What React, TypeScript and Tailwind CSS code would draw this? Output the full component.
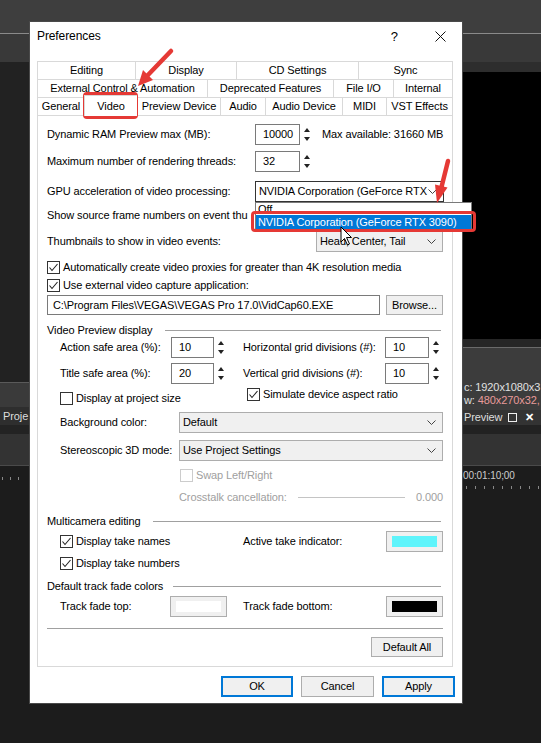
import React from 'react';

// 數字輸入框旁的上下箭頭
const SpinArrows = () => (
  <svg width="8" height="21" viewBox="0 0 8 21" className="ml-[3px] shrink-0">
    <path d="M1 8 L4 4 L7 8 Z" fill="#222" />
    <path d="M1 13 L4 17 L7 13 Z" fill="#222" />
  </svg>
);

const SpinBox = ({ value, w }: { value: string; w: string }) => (
  <div className="flex items-center shrink-0">
    <div className={`${w} h-[21px] border border-[#7a7a7a] bg-white flex items-center pl-[7px]`}>{value}</div>
    <SpinArrows />
  </div>
);

const Chevron = () => (
  <svg width="9" height="5" viewBox="0 0 9 5" className="shrink-0">
    <path d="M0.5 0.5 L4.5 4.5 L8.5 0.5" fill="none" stroke="#444" strokeWidth="1" />
  </svg>
);

const Select = ({ text, w, focused }: { text: string; w: string; focused?: boolean }) => (
  <div
    className={`${w} h-[21px] border ${
      focused ? 'border-[#333333] bg-white' : 'border-[#adadad] bg-[#f0f0f0]'
    } flex items-center justify-between pl-[3px] pr-[6px] shrink-0`}
  >
    <span className="whitespace-nowrap">{text}</span>
    <Chevron />
  </div>
);

const Check = ({ checked, label, disabled }: { checked?: boolean; label: string; disabled?: boolean }) => (
  <div className="flex items-center h-[14px]">
    <div
      className={`w-[13px] h-[13px] border ${
        disabled ? 'border-[#cccccc]' : 'border-[#333333]'
      } bg-white flex items-center justify-center shrink-0`}
    >
      {checked && (
        <svg width="11" height="11" viewBox="0 0 11 11">
          <path d="M1.5 5.5 L4 8.5 L9.5 2" fill="none" stroke="#222" strokeWidth="1.1" />
        </svg>
      )}
    </div>
    <span className={`ml-[3px] whitespace-nowrap ${disabled ? 'text-[#a0a0a0]' : ''}`}>{label}</span>
  </div>
);

const GroupHeader = ({ label, w }: { label: string; w: string }) => (
  <div className="flex items-center h-[14px]">
    <span className={`${w} shrink-0 whitespace-nowrap`}>{label}</span>
    <div className="flex-1 h-px bg-[#a0a0a0] mr-[2px]" />
  </div>
);

const ColorBtn = ({ inner }: { inner: string }) => (
  <div className="w-[57px] h-[21px] border border-[#adadad] bg-[#f0f0f0] flex items-center justify-center shrink-0">
    <div className={`w-[45px] h-[11px] ${inner}`} />
  </div>
);

const Tab = ({ label, w, last }: { label: string; w: string; last?: boolean }) => (
  <div
    className={`${w} h-[18px] border-t border-l ${
      last ? 'border-r' : ''
    } border-[#d9d9d9] bg-white flex items-center justify-center whitespace-nowrap`}
  >
    {label}
  </div>
);

export default function App() {
  return (
    <div className="relative w-[541px] h-[743px] overflow-hidden bg-[#1c1c1c] font-['Liberation_Sans',Arial,sans-serif] text-[11px] leading-[13px] tracking-[-0.1px] text-black">
      {/* 背景：VEGAS 主視窗 */}
      <div className="absolute inset-0 flex flex-col">
        <div className="h-[33px] bg-[#3e3e3e]" />
        <div className="h-px bg-[#8a8a8a]" />
        <div className="h-[28px] bg-[#393939]" />
        <div className="flex flex-1">
          <div className="w-[29px] flex flex-col">
            <div className="h-[320px] bg-[#222222]" />
            <div className="h-px bg-[#5a5a5a]" />
            <div className="h-[24px] bg-[#3a3a3a]" />
            <div className="h-[18px] bg-[#2e2e2e] text-[#dddddd] text-[11px] pl-[3px] flex items-center whitespace-nowrap">
              Proje
            </div>
            <div className="h-[9px] bg-[#232323]" />
            <div className="h-[31px] bg-[#333333]" />
            <div className="h-px bg-[#4a4a4a]" />
            <div className="h-[14px] flex items-end gap-[7px] pl-[2px]">
              <div className="w-px h-[3px] bg-[#888]" />
              <div className="w-px h-[3px] bg-[#888]" />
              <div className="w-px h-[3px] bg-[#888]" />
            </div>
          </div>
          <div className="flex-1" />
          <div className="w-[78px] flex flex-col">
            <div className="h-[10px] bg-[#2d2d2d]" />
            <div className="h-[267px] bg-black" />
            <div className="h-[8px] bg-[#262626]" />
            <div className="h-px bg-[#6a6a6a]" />
            <div className="h-[62px] bg-[#3c3c3c] text-[11px] leading-[13px] flex flex-col justify-end pb-[3px] pl-[1px] whitespace-nowrap">
              <div className="text-[#e0e0e0]">c: 1920x1080x3</div>
              <div>
                <span className="text-[#e0e0e0]">w: </span>
                <span className="text-[#e79a9a]">480x270x32,</span>
              </div>
            </div>
            <div className="h-[15px] bg-[#333333] text-[11px] text-[#dddddd] flex items-center pl-[1px] whitespace-nowrap">
              Preview
              <div className="ml-[6px] w-[9px] h-[9px] border border-[#eeeeee]" />
              <span className="ml-[8px] font-bold text-white">✕</span>
            </div>
            <div className="h-[9px] bg-[#222222]" />
            <div className="h-[31px] bg-[#333333]" />
            <div className="h-px bg-[#4a4a4a]" />
            <div className="h-[20px] text-[10px] text-[#cccccc] pt-[3px] whitespace-nowrap">00:01:10;00</div>
            <div className="flex gap-[8px] pl-[3px]">
              {[0, 1, 2, 3, 4, 5, 6, 7, 8].map((i) => (
                <div key={i} className="w-px h-[3px] bg-[#888]" />
              ))}
            </div>
          </div>
        </div>
      </div>

      {/* Preferences 對話框 */}
      <div className="absolute left-[29px] top-[21px] w-[434px] h-[683px] border border-[#4a4a4a] bg-white flex flex-col">
        <div className="h-[29px] flex items-center pl-[7px] text-[12px]">
          <span>Preferences</span>
          <span className="ml-auto text-[13px]">?</span>
          <svg width="11" height="11" viewBox="0 0 11 11" className="ml-[37px] mr-[16px]">
            <path d="M0.5 0.5 L10.5 10.5 M10.5 0.5 L0.5 10.5" stroke="#111" strokeWidth="1" />
          </svg>
        </div>

        <div className="mt-[10px] pl-[7px] pr-[9px]">
          <div className="flex">
            <Tab label="Editing" w="w-[98px]" />
            <Tab label="Display" w="w-[101px]" />
            <Tab label="CD Settings" w="w-[122px]" />
            <Tab label="Sync" w="w-[95px]" last />
          </div>
          <div className="flex">
            <Tab label="External Control & Automation" w="w-[170px]" />
            <Tab label="Deprecated Features" w="w-[126px]" />
            <Tab label="File I/O" w="w-[60px]" />
            <Tab label="Internal" w="w-[60px]" last />
          </div>
          <div className="flex items-end h-[18px]">
            <Tab label="General" w="w-[47px]" />
            <div className="relative z-10 w-[53px] h-[21px] mb-[-1px] border-t border-l border-[#d9d9d9] bg-white flex items-center justify-center">
              Video
            </div>
            <Tab label="Preview Device" w="w-[83px]" />
            <Tab label="Audio" w="w-[45px]" />
            <Tab label="Audio Device" w="w-[77px]" />
            <Tab label="MIDI" w="w-[44px]" />
            <Tab label="VST Effects" w="w-[67px]" last />
          </div>

          {/* 分頁內容 */}
          <div className="h-[552px] border border-[#d9d9d9] bg-white px-[9px] flex flex-col">
            <div className="mt-[8px] flex items-center h-[21px]">
              <span className="w-[208px] shrink-0">Dynamic RAM Preview max (MB):</span>
              <SpinBox value="10000" w="w-[45px]" />
              <span className="ml-[11px] whitespace-nowrap">Max available: 31660 MB</span>
            </div>
            <div className="mt-[6px] flex items-center h-[21px]">
              <span className="w-[208px] shrink-0">Maximum number of rendering threads:</span>
              <SpinBox value="32" w="w-[45px]" />
            </div>
            <div className="mt-[9px] flex items-center h-[21px]">
              <span className="w-[208px] shrink-0">GPU acceleration of video processing:</span>
              <Select text="NVIDIA Corporation (GeForce RTX" w="w-[189px]" focused />
            </div>
            <div className="mt-[3px] flex items-center h-[21px]">
              {/* 被展開的下拉選單遮住，標籤只露出前段 */}
              <span className="w-[206px] shrink-0 whitespace-nowrap overflow-hidden">
                Show source frame numbers on event thu
              </span>
            </div>
            <div className="mt-[5px] flex items-center h-[21px]">
              <span className="w-[269px] shrink-0">Thumbnails to show in video events:</span>
              <Select text="Head, Center, Tail" w="w-[127px]" />
            </div>
            <div className="mt-[8px]">
              <Check checked label="Automatically create video proxies for greater than 4K resolution media" />
            </div>
            <div className="mt-[4px]">
              <Check checked label="Use external video capture application:" />
            </div>
            <div className="mt-[3px] flex items-center h-[20px]">
              <div className="w-[333px] h-[20px] border border-[#7a7a7a] bg-white flex items-center pl-[5px] whitespace-nowrap overflow-hidden">
                C:\Program Files\VEGAS\VEGAS Pro 17.0\VidCap60.EXE
              </div>
              <div className="ml-[6px] w-[57px] h-[20px] border border-[#adadad] bg-[#f0f0f0] flex items-center justify-center">
                Browse...
              </div>
            </div>
            <div className="mt-[8px]">
              <GroupHeader label="Video Preview display" w="w-[118px]" />
            </div>
            <div className="flex items-center h-[21px] pl-[13px]">
              <span className="w-[111px] shrink-0">Action safe area (%):</span>
              <SpinBox value="10" w="w-[43px]" />
              <span className="ml-[18px] w-[142px] shrink-0 whitespace-nowrap">Horizontal grid divisions (#):</span>
              <SpinBox value="10" w="w-[44px]" />
            </div>
            <div className="mt-[5px] flex items-center h-[21px] pl-[13px]">
              <span className="w-[111px] shrink-0">Title safe area (%):</span>
              <SpinBox value="20" w="w-[43px]" />
              <span className="ml-[18px] w-[142px] shrink-0 whitespace-nowrap">Vertical grid divisions (#):</span>
              <SpinBox value="10" w="w-[44px]" />
            </div>
            <div className="mt-[3px] flex h-[18px] pl-[13px]">
              <div className="w-[187px] shrink-0 flex items-end">
                <Check label="Display at project size" />
              </div>
              <div className="flex items-start">
                <Check checked label="Simulate device aspect ratio" />
              </div>
            </div>
            <div className="mt-[7px] flex items-center h-[21px] pl-[13px]">
              <span className="w-[119px] shrink-0">Background color:</span>
              <Select text="Default" w="w-[264px]" />
            </div>
            <div className="mt-[7px] flex items-center h-[21px] pl-[13px]">
              <span className="w-[119px] shrink-0">Stereoscopic 3D mode:</span>
              <Select text="Use Project Settings" w="w-[264px]" />
            </div>
            <div className="mt-[7px] pl-[133px]">
              <Check disabled label="Swap Left/Right" />
            </div>
            <div className="mt-[8px] flex items-center h-[14px] pl-[132px] text-[#a0a0a0]">
              <span className="w-[119px] shrink-0 whitespace-nowrap">Crosstalk cancellation:</span>
              <div className="w-[107px] h-px bg-[#c4c4c4]" />
              <span className="flex-1 text-right">0.000</span>
            </div>
            <div className="mt-[10px]">
              <GroupHeader label="Multicamera editing" w="w-[106px]" />
            </div>
            <div className="mt-[3px] flex items-center h-[21px] pl-[13px]">
              <div className="w-[183px] shrink-0">
                <Check checked label="Display take names" />
              </div>
              <span className="w-[143px] shrink-0">Active take indicator:</span>
              <ColorBtn inner="bg-[#5ef4fb]" />
            </div>
            <div className="mt-[4px] pl-[13px]">
              <Check checked label="Display take numbers" />
            </div>
            <div className="mt-[9px]">
              <GroupHeader label="Default track fade colors" w="w-[126px]" />
            </div>
            <div className="mt-[3px] flex items-center h-[21px] pl-[13px]">
              <span className="w-[110px] shrink-0">Track fade top:</span>
              <ColorBtn inner="bg-white" />
              <span className="ml-[16px] w-[143px] shrink-0">Track fade bottom:</span>
              <ColorBtn inner="bg-black" />
            </div>
            <div className="mt-[11px] h-px bg-[#a0a0a0]" />
            <div className="mt-[8px] flex justify-end">
              <div className="w-[72px] h-[20px] border border-[#adadad] bg-[#f0f0f0] flex items-center justify-center">
                Default All
              </div>
            </div>
          </div>
        </div>

        {/* 底部按鈕 */}
        <div className="mt-[9px] flex justify-end gap-[8px] pr-[7px]">
          <div className="w-[72px] h-[21px] border-2 border-[#0078d7] bg-[#f0f0f0] flex items-center justify-center">OK</div>
          <div className="w-[73px] h-[21px] border border-[#adadad] bg-[#f0f0f0] flex items-center justify-center">Cancel</div>
          <div className="w-[73px] h-[21px] border-2 border-[#0078d7] bg-[#f0f0f0] flex items-center justify-center">Apply</div>
        </div>
      </div>

      {/* 展開的下拉選單 */}
      <div className="absolute left-[255px] top-[202px] w-[217px] h-[28px] border border-[#7a7a7a] bg-white flex flex-col">
        <div className="h-[12px] pl-[2px] leading-[12px]">Off</div>
        <div className="h-[14px] bg-[#0078d7] text-white pl-[2px] flex items-center whitespace-nowrap">
          NVIDIA Corporation (GeForce RTX 3090)
        </div>
      </div>

      {/* 紅色標註框 */}
      <div className="absolute left-[83px] top-[92px] w-[55px] h-[27px] border-[3px] border-[#e53935] rounded-[4px]" />
      <div className="absolute left-[251px] top-[211px] w-[225px] h-[21px] border-[3px] border-[#e53935] rounded-[4px]" />

      {/* 紅色箭頭與滑鼠游標 */}
      <svg className="absolute left-0 top-0 pointer-events-none" width="541" height="743" viewBox="0 0 541 743">
        <line x1="171" y1="51" x2="147" y2="76" stroke="#e53935" strokeWidth="4.5" strokeLinecap="round" />
        <polygon points="138,86 153,80 143,70" fill="#e53935" />
        <line x1="448" y1="161" x2="441.5" y2="187" stroke="#e53935" strokeWidth="4.5" strokeLinecap="round" />
        <polygon points="437,203 447.5,187.5 435,184.5" fill="#e53935" />
        <path
          d="M341 227 L341 242 L344.5 238.5 L347.5 245 L349.5 244 L346.5 237.5 L351.5 237.5 Z"
          fill="#fff"
          stroke="#000"
          strokeWidth="1"
        />
      </svg>
    </div>
  );
}
